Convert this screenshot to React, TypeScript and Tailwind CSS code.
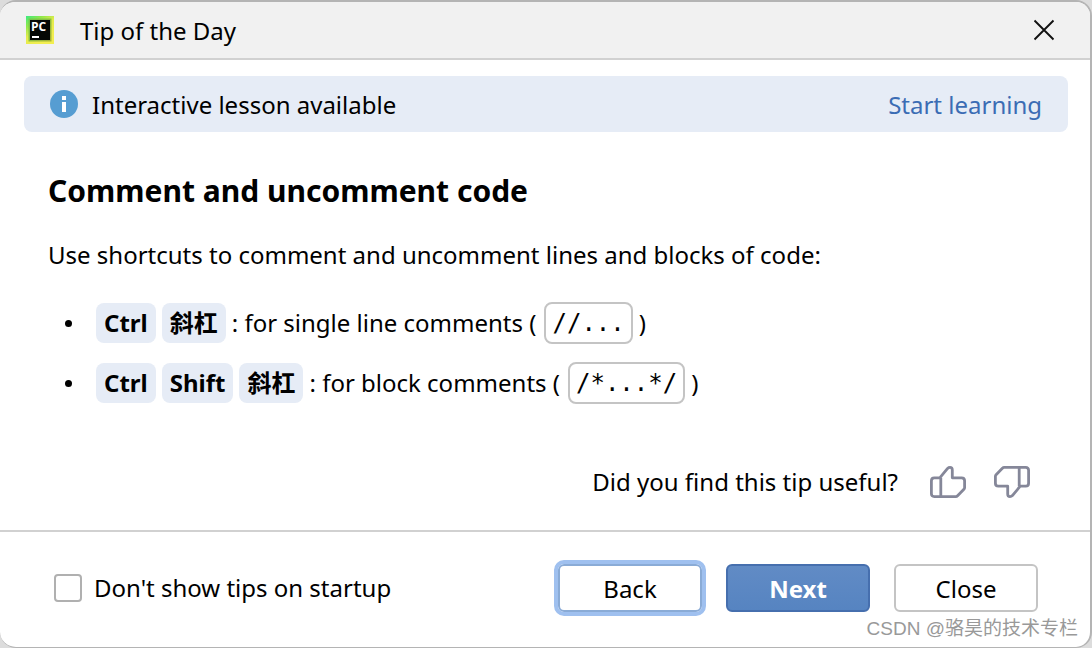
import type { ReactNode } from "react";

function PyCharmLogo() {
  return (
    <svg width="28" height="28" viewBox="0 0 28 28" aria-hidden="true">
      <defs>
        <linearGradient id="frame" x1="0" y1="0" x2="0.6" y2="0.9">
          <stop offset="0" stopColor="#3bea84" />
          <stop offset="0.3" stopColor="#8fe84a" />
          <stop offset="0.6" stopColor="#e3ec4c" />
          <stop offset="1" stopColor="#f2ee50" />
        </linearGradient>
        <linearGradient id="shade" x1="0" y1="0" x2="1" y2="1">
          <stop offset="0" stopColor="#6fc94c" />
          <stop offset="1" stopColor="#a9b236" />
        </linearGradient>
      </defs>
      <rect width="28" height="28" fill="url(#frame)" />
      <rect x="2.5" y="2.5" width="23" height="23" fill="url(#shade)" />
      <rect x="4" y="4" width="20" height="20" fill="#050805" />
      <text x="5" y="14.5" fill="#fff" fontSize="12" fontWeight="700" fontFamily="'Open Sans', sans-serif">
        PC
      </text>
      <rect x="6" y="20" width="7" height="2" fill="#fff" />
    </svg>
  );
}

function ThumbIcon({ down = false }: { down?: boolean }) {
  return (
    <svg
      width="36"
      height="32"
      viewBox="0 0 36 32"
      fill="none"
      stroke="#858799"
      strokeWidth="2.8"
      strokeLinejoin="round"
      aria-hidden="true"
    >
      <g transform={down ? "rotate(180 18 16)" : undefined}>
        <path d="M4.3 11.8H9.8L17.6 2.4Q18.6 1.4 20 1.4Q22.3 1.4 22.3 4V11.8H31.6Q34.6 11.8 34.6 14.8V21.5Q34.6 22.5 33.9 23.3L27.6 29.8Q26.8 30.6 25.8 30.6H4.3Q1.4 30.6 1.4 27.7V14.8Q1.4 11.8 4.3 11.8Z" />
        <path d="M10.8 11.8V30.6" />
      </g>
    </svg>
  );
}

function Key({ children }: { children: ReactNode }) {
  return (
    <kbd className="mr-1.5 flex h-10 items-center rounded-lg bg-[#e6ecf6] px-2 font-['Noto_Sans','Noto_Sans_CJK_SC',sans-serif] text-2xl font-bold">
      {children}
    </kbd>
  );
}

function Shortcut({ keys, text, code }: { keys: string[]; text: string; code: string }) {
  return (
    <li className="flex h-10 items-center">
      <span className="mr-6 ml-[17px] size-[7px] rounded-full bg-black" />
      {keys.map((key) => (
        <Key key={key}>{key}</Key>
      ))}
      <span>: {text} (</span>
      <code className="mr-1.5 ml-2 flex h-[42px] items-center rounded-lg border-2 border-[#c4c4c4] px-1.5 font-['DejaVu_Sans_Mono',monospace] text-2xl">
        {code}
      </code>
      <span>)</span>
    </li>
  );
}

export default function App() {
  return (
    <div className="flex min-h-screen bg-[#dcdcdc] font-['Noto_Sans','Noto_Sans_CJK_SC',sans-serif] text-2xl text-black">
      <main className="relative flex grow flex-col overflow-hidden rounded-2xl border-t-2 border-r-2 border-b border-[#b4b4b4] bg-white">
        <header className="flex h-[58px] items-center border-b-2 border-[#d1d1d1] bg-[#f1f1f1] pr-[35px] pl-[26px]">
          <PyCharmLogo />
          <h1 className="ml-[26px] pt-0.5">Tip of the Day</h1>
          <button type="button" aria-label="Close dialog" className="ml-auto">
            <svg width="22" height="22" viewBox="0 0 22 22" stroke="#111" strokeWidth="1.9" aria-hidden="true">
              <path d="M1.5 1.5L20.5 20.5M20.5 1.5L1.5 20.5" />
            </svg>
          </button>
        </header>

        <section className="mt-4 mr-[22px] ml-6 flex h-14 items-center rounded-lg bg-[#e6ecf6] px-[26px]">
          <svg width="28" height="28" viewBox="0 0 28 28" aria-hidden="true">
            <circle cx="14" cy="14" r="14" fill="#569dd2" />
            <path d="M12 6h4v4h-4zM12 12h4v10h-4z" fill="#fff" />
          </svg>
          <span className="ml-3.5 pt-0.5">Interactive lesson available</span>
          <a href="#lesson" className="ml-auto pt-0.5 text-[#3b6cb4]">
            Start learning
          </a>
        </section>

        <article className="px-12 pt-9">
          <h2 className="text-[30px] leading-[46px] font-bold">Comment and uncomment code</h2>
          <p className="mt-6 leading-[34px]">Use shortcuts to comment and uncomment lines and blocks of code:</p>
          <ul className="mt-[31px] flex flex-col gap-5">
            <Shortcut keys={["Ctrl", "斜杠"]} text="for single line comments" code="//..." />
            <Shortcut keys={["Ctrl", "Shift", "斜杠"]} text="for block comments" code="/*...*/" />
          </ul>
        </article>

        <div className="mt-auto flex items-center justify-end gap-7 pt-8 pr-[60px] pb-8">
          <span className="mr-1">Did you find this tip useful?</span>
          <button type="button" aria-label="Useful">
            <ThumbIcon />
          </button>
          <button type="button" aria-label="Not useful">
            <ThumbIcon down />
          </button>
        </div>

        <footer className="flex h-[117px] items-center gap-6 border-t-2 border-[#d1d1d1] pr-[52px] pb-1 pl-[54px]">
          <label className="mr-auto flex items-center gap-3">
            <input type="checkbox" className="size-7 appearance-none rounded border-2 border-[#b0b0b0] bg-white" />
            Don't show tips on startup
          </label>
          <button
            type="button"
            className="h-12 w-36 rounded-md border-2 border-[#8aabd6] bg-white pt-0.5 outline-4 outline-[#9fc0ef]"
          >
            Back
          </button>
          <button
            type="button"
            className="h-12 w-36 rounded-md border-2 border-[#466fae] bg-linear-to-b from-[#618bc5] to-[#5684c1] pt-0.5 font-bold text-white"
          >
            Next
          </button>
          <button type="button" className="h-12 w-36 rounded-md border-2 border-[#c4c4c4] bg-white pt-0.5">
            Close
          </button>
        </footer>

        <span className="absolute right-3 bottom-1 font-['Liberation_Sans','Noto_Sans_CJK_SC',sans-serif] text-[19px] leading-7 text-[#999]">
          CSDN @骆昊的技术专栏
        </span>
      </main>
    </div>
  );
}
